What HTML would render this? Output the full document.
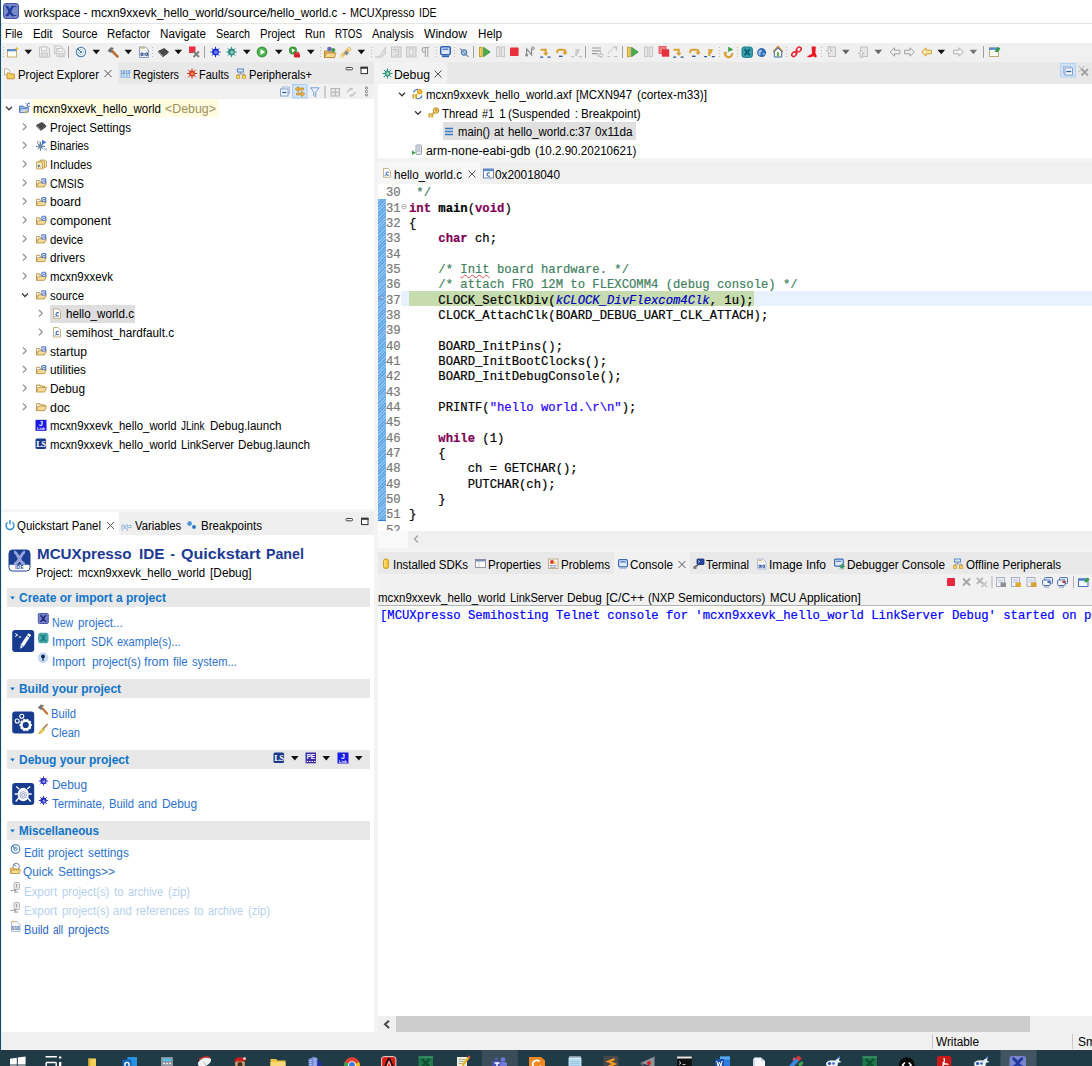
<!DOCTYPE html>
<html lang="en"><head><meta charset="utf-8"><title>MCUXpresso IDE</title>
<style>
html,body{margin:0;padding:0}
body{width:1092px;height:1066px;overflow:hidden;background:#f3f3f3;position:relative;font-family:'Liberation Sans', sans-serif;font-size:12px;color:#000}
#root{position:absolute;left:0;top:0;width:1092px;height:1066px;overflow:hidden}
#root>div,#root>span,#root>svg,#root>pre{position:absolute}
#root>span{white-space:pre;transform-origin:0 50%}
pre{margin:0}

.code{font-family:"Liberation Mono",monospace;font-size:12.22px;line-height:15.333px;white-space:pre;letter-spacing:0;-webkit-text-stroke:.2px}
.kw{color:#7f0055;font-weight:bold}
.cm{color:#3f7f5f}
.st{color:#2a00ff}
.en{color:#0000c0;font-style:italic}
.ln{color:#787878}
.sq{text-decoration:underline wavy #e05050 1px;text-underline-offset:1px}

</style></head><body><div id="root">
<div style="left:0px;top:0px;width:1092px;height:24px;background:#fff;"></div>
<div style="left:0px;top:23px;width:1092px;height:1px;background:#e5e5e5;"></div>
<div style="left:0px;top:24px;width:1092px;height:19px;background:#fff;"></div>
<div style="left:0px;top:43px;width:1092px;height:20px;background:#f0f0f0;"></div>
<div style="left:2px;top:62px;width:372px;height:22px;background:#e8e8e8;"></div>
<div style="left:2px;top:62px;width:116px;height:22px;background:#f1f1f1;"></div>
<div style="left:2px;top:84px;width:372px;height:15px;background:#f1f1f1;"></div>
<div style="left:2px;top:99px;width:372px;height:410px;background:#fff;"></div>
<div style="left:32px;top:99px;width:187px;height:18px;background:#fffce0;"></div>
<div style="left:50px;top:304.5px;width:85px;height:18.5px;background:#dedede;"></div>
<div style="left:2px;top:509px;width:372px;height:3px;background:#f6f6f6;"></div>
<div style="left:2px;top:512px;width:372px;height:23px;background:#efefef;"></div>
<div style="left:2px;top:512px;width:117px;height:23px;background:#fff;"></div>
<div style="left:2px;top:535px;width:372px;height:498px;background:#fff;"></div>
<div style="left:7px;top:588px;width:363px;height:19px;background:#e8e8e8;"></div>
<div style="left:7px;top:679px;width:363px;height:19px;background:#e8e8e8;"></div>
<div style="left:7px;top:750px;width:363px;height:19px;background:#e8e8e8;"></div>
<div style="left:7px;top:821px;width:363px;height:19px;background:#e8e8e8;"></div>
<div style="left:378px;top:62px;width:714px;height:22px;background:#e8e8e8;"></div>
<div style="left:378px;top:62px;width:69px;height:22px;background:#f2f2f2;"></div>
<div style="left:378px;top:84px;width:714px;height:74px;background:#fff;"></div>
<div style="left:443px;top:122px;width:193px;height:18px;background:#e0e0e0;"></div>
<div style="left:378px;top:162px;width:714px;height:22px;background:#f0f0f0;"></div>
<div style="left:378px;top:162px;width:102px;height:22px;background:#f7f7f7;"></div>
<div style="left:378px;top:184px;width:714px;height:364px;background:#fff;"></div>
<div style="left:378px;top:552px;width:714px;height:22px;background:#e9e9e9;"></div>
<div style="left:614px;top:552px;width:76px;height:22px;background:#f1f1f1;"></div>
<div style="left:378px;top:574px;width:714px;height:31px;background:#f1f1f1;"></div>
<div style="left:378px;top:605px;width:714px;height:1px;background:#b4b4b4;"></div>
<div style="left:378px;top:606px;width:714px;height:410px;background:#fff;"></div>
<div style="left:378px;top:1016px;width:714px;height:16px;background:#f0f0f0;"></div>
<div style="left:396px;top:1016px;width:634px;height:16px;background:#cdcdcd;"></div>
<div style="left:0px;top:1032px;width:1092px;height:18px;background:#f0f0f0;"></div>
<div style="left:932px;top:1034px;width:1px;height:15px;background:#c8c8c8;"></div>
<div style="left:1072px;top:1034px;width:1px;height:15px;background:#c8c8c8;"></div>
<div style="left:0px;top:1050px;width:1092px;height:16px;background:#203a46;"></div>
<div style="left:0px;top:0px;width:1px;height:1050px;background:#0f4c6c;"></div>
<div style="left:1px;top:24px;width:1px;height:1026px;background:#e8eef2;"></div>
<div style="left:378px;top:184px;width:714px;height:347px;overflow:hidden"><div style="position:absolute;left:23px;top:107.13px;width:700px;height:15.33px;background:#e8f2fe"></div><div style="position:absolute;left:31px;top:107.13px;width:345px;height:15.33px;background:#c6dbae"></div><div style="position:absolute;left:0px;top:14.80px;width:8px;height:321.00px;background:repeating-linear-gradient(135deg,#62a8e8 0 1.2px,#8cc2f0 1.2px 2.4px);border-bottom:1px solid #2f80d8"></div><pre class="code ln" style="position:absolute;left:8px;top:2.30px">30
31
32
33
34
35
36
37
38
39
40
41
42
43
44
45
46
47
48
49
50
51
52</pre><pre class="code" style="position:absolute;left:31px;top:2.30px"> <span class="cm">*/</span>
<span class="kw">int</span> <b>main</b>(<span class="kw">void</span>)
{
    <span class="kw">char</span> ch;

    <span class="cm">/* <span class="sq">Init</span> board hardware. */</span>
    <span class="cm">/* attach FRO 12M to FLEXCOMM4 (debug console) */</span>
    CLOCK_SetClkDiv(<span class="en">kCLOCK_DivFlexcom4Clk</span>, 1u);
    CLOCK_AttachClk(BOARD_DEBUG_UART_CLK_ATTACH);

    BOARD_InitPins();
    BOARD_InitBootClocks();
    BOARD_InitDebugConsole();

    PRINTF(<span class="st">"hello world.\r\n"</span>);

    <span class="kw">while</span> (1)
    {
        ch = GETCHAR();
        PUTCHAR(ch);
    }
}
</pre></div>
<div style="left:408px;top:531px;width:684px;height:17px;background:#f0f0f0;"></div>
<div style="left:378px;top:531px;width:30px;height:17px;background:#f9f9f9;"></div>
<pre class="code" style="left:380px;top:608.6px;color:#0000ff;-webkit-text-stroke:.2px #0000ff">[MCUXpresso Semihosting Telnet console for 'mcxn9xxevk_hello_world LinkServer Debug' started on port 52719 @ 127.0.0.1]</pre>
<svg style="left:0;top:0" width="1092" height="1066" viewBox="0 0 1092 1066"><path d="M3.5 47V57" stroke="#c8b8a0" stroke-width="1" stroke-dasharray="1 2"/>
<g transform="translate(7,46.5)"><rect x="0.5" y="3" width="9" height="7.500" fill="#fffef0" stroke="#c8b070"/><rect x="0" y="2.500" width="10" height="2.300" fill="#5a8ac8"/><path d="M9.500 .2l.9 1.400 1.400.5-1.400.9-.4 1.400-1-1.400-1.400-.4 1.400-1z" fill="#e8b830"/></g>
<path d="M24.5 49.8h7.6l-3.8 4.4z" fill="#111"/>
<g transform="translate(39,46.5)"><path d="M.5 .5h8l2 2v8h-10z" fill="#ececec" stroke="#c4c4c4"/><rect x="2.5" y=".5" width="5" height="3.5" fill="#f8f8f8" stroke="#c4c4c4" stroke-width=".8"/><rect x="2.5" y="6.5" width="6" height="4" fill="#dcdcdc" stroke="#c4c4c4" stroke-width=".8"/></g>
<g transform="translate(54,46.5)"><g transform="translate(0,-1) scale(.8)"><path d="M.5 .5h8l2 2v8h-10z" fill="#ececec" stroke="#c4c4c4"/><rect x="2.5" y=".5" width="5" height="3.5" fill="#f8f8f8" stroke="#c4c4c4" stroke-width=".8"/><rect x="2.5" y="6.5" width="6" height="4" fill="#dcdcdc" stroke="#c4c4c4" stroke-width=".8"/></g><g transform="translate(2.5,1.8) scale(.8)"><path d="M.5 .5h8l2 2v8h-10z" fill="#ececec" stroke="#c4c4c4"/><rect x="2.5" y=".5" width="5" height="3.5" fill="#f8f8f8" stroke="#c4c4c4" stroke-width=".8"/><rect x="2.5" y="6.5" width="6" height="4" fill="#dcdcdc" stroke="#c4c4c4" stroke-width=".8"/></g></g>
<rect x="68" y="46" width="1" height="12" fill="#a0a0a0"/>
<g transform="translate(76,47.0)"><circle cx="5" cy="5" r="4.6" fill="#fff" stroke="#4f86b8" stroke-width="1.2"/><circle cx="5" cy="5" r="2.6" fill="none" stroke="#4f86b8" stroke-width=".9" stroke-dasharray="1.2 1"/><circle cx="5" cy="5" r="1" fill="#2c5f90"/><path d="M1.5 1.5L5 5" stroke="#2c5f90" stroke-width="1"/></g>
<path d="M92.5 49.8h7.6l-3.8 4.4z" fill="#111"/>
<g transform="translate(107,46.5)"><path d="M4 3.5L10.5 10" stroke="#b87038" stroke-width="2.6" stroke-linecap="round"/><path d="M0.5 4.2L3.8 .8 7 1.6 4.6 4 5.4 5 3.6 6.4z" fill="#707070"/></g>
<path d="M124.5 49.8h7.6l-3.8 4.4z" fill="#111"/>
<g transform="translate(139,46.5)"><path d="M.5 .5h6l3 3v7.5h-9z" fill="#f4f6fb" stroke="#8a9cc0"/><path d="M1.5 1.5h4" stroke="#e0b040" stroke-width="1.2"/><path d="M2 6.5h1.6v2.6H2zM5 6.5v2.6M6.8 6.5h1.6v2.6H6.8z" fill="none" stroke="#35508c" stroke-width="1"/></g>
<path d="M152.5 47V57" stroke="#c8b8a0" stroke-width="1" stroke-dasharray="1 2"/>
<g transform="translate(158,47.5)"><g transform="scale(.88)"><path d="M0 4L7 .5 12 4.5 5.5 9.5z" fill="#4a4a4a"/><path d="M0 4L5.5 9.5 5.5 11 0 5.5z" fill="#7a7a7a"/><path d="M5.5 9.5L12 4.5 12 6 5.5 11z" fill="#2e2e2e"/></g></g>
<path d="M174.5 49.8h7.6l-3.8 4.4z" fill="#111"/>
<g transform="translate(189,46.5)"><rect x="0" y="0" width="6.5" height="6.5" fill="#e83040"/><path d="M4.5 5l5.5 5.5M10 5l-5.5 5.5" stroke="#808080" stroke-width="2"/></g>
<rect x="204" y="46" width="1" height="12" fill="#a0a0a0"/>
<g transform="translate(210,46.5)"><g stroke="#2030d0" stroke-width="1"><path d="M5.500 .3v10.400M.3 5.500h10.400M1.900 1.900l7.200 7.200M9.100 1.900l-7.200 7.200"/></g><circle cx="5.500" cy="5.500" r="3.400" fill="#2030d0"/><circle cx="5.900" cy="5.800" r="1.700" fill="#6a80f0"/></g>
<g transform="translate(226,46.5)"><g stroke="#2f8a8a" stroke-width="1"><path d="M5.500 .3v10.400M.3 5.500h10.400M1.900 1.900l7.200 7.200M9.100 1.900l-7.200 7.200"/></g><circle cx="5.500" cy="5.500" r="3.400" fill="#2f8a8a"/><circle cx="5.900" cy="5.800" r="1.700" fill="#8ad0a0"/></g>
<path d="M243 49.8h7.6l-3.8 4.4z" fill="#111"/>
<g transform="translate(256.5,46.5)"><circle cx="5.5" cy="5.5" r="5.4" fill="#3a9a3a"/><circle cx="5.5" cy="5.5" r="4.2" fill="#4fb34f"/><path d="M4 2.6v5.8l4.6-2.9z" fill="#fff"/></g>
<path d="M275 49.8h7.6l-3.8 4.4z" fill="#111"/>
<g transform="translate(289,46.5)"><circle cx="4" cy="4" r="4" fill="#3a9a3a"/><path d="M2.8 1.8v4.4l3.6-2.2z" fill="#fff"/><rect x="5" y="7" width="6" height="4" rx="0.8" fill="#d82030"/><rect x="6.5" y="5.8" width="3" height="1.5" fill="none" stroke="#d82030" stroke-width=".9"/></g>
<path d="M307 49.8h7.6l-3.8 4.4z" fill="#111"/>
<path d="M320.5 47V57" stroke="#c8b8a0" stroke-width="1" stroke-dasharray="1 2"/>
<g transform="translate(324,46.5)"><path d="M.5 4.5h4l1 1h5v5.5h-10z" fill="#e8b860" stroke="#b88830"/><path d="M.5 11L2.5 6.5h9.5L10.5 11z" fill="#f6d890" stroke="#b88830" stroke-width=".8"/><circle cx="5.5" cy="2.5" r="2.3" fill="#7060c0"/><circle cx="9.2" cy="3.5" r="2.1" fill="#3c9a4c"/></g>
<g transform="translate(340,46.5)"><path d="M1.2 10.2L7.4 4" stroke="#e8c060" stroke-width="3.2" stroke-linecap="round"/><path d="M5.2 7.8L7.8 5.2" stroke="#8a8a90" stroke-width="3.6"/><path d="M7 2.5L9 .5 11.3 2.8 9.3 4.8z" fill="#f6e2a0" stroke="#d8b050" stroke-width=".8"/><path d="M0 11.5L2 9" stroke="#fff4c0" stroke-width="1.6"/></g>
<path d="M357.5 49.8h7.6l-3.8 4.4z" fill="#111"/>
<path d="M371.5 47V57" stroke="#c8b8a0" stroke-width="1" stroke-dasharray="1 2"/>
<g transform="translate(375,46.5)"><path d="M0 10.5h4L10.5 .5v7l-4 3.2z" fill="#dcdcdc" stroke="#c8c8c8" stroke-width=".8"/></g>
<g transform="translate(391,46.5)"><rect x=".5" y=".5" width="9.5" height="10" fill="#e4e4e4" stroke="#c4c4c4"/><path d="M2 3h3v3M7.500 2v6.500H4" fill="none" stroke="#c0c0c0"/></g>
<g transform="translate(406,46.5)"><rect x=".5" y=".5" width="9.5" height="10" fill="#e4e4e4" stroke="#c4c4c4"/><rect x="3.500" y="2.500" width="3.500" height="6" fill="#f0f0f0" stroke="#c8c8c8"/></g>
<g transform="translate(421,46.5)"><path d="M6.8 1v9.5M4.4 1v9.5M8.3 1H3.6a2.4 2.4 0 0 0 0 4.8h.8" fill="none" stroke="#a8a8a8" stroke-width="1.1"/></g>
<path d="M436.5 47V57" stroke="#c8b8a0" stroke-width="1" stroke-dasharray="1 2"/>
<g transform="translate(440,46.0)"><rect x=".7" y=".7" width="9.6" height="8" rx="1.4" fill="#dfe9f8" stroke="#2d5fb4" stroke-width="1.5"/><rect x="2.6" y="2.6" width="5.8" height="1.3" fill="#3d6dbd"/><rect x="2" y="9.6" width="7" height="1.6" fill="#2d5fb4"/></g>
<path d="M454.5 47V57" stroke="#c8b8a0" stroke-width="1" stroke-dasharray="1 2"/>
<g transform="translate(459,47.5)"><circle cx="5" cy="5" r="2.6" fill="#cfe0f4" stroke="#3d78c0" stroke-width="1.2"/><path d="M1 1l8.5 8.5" stroke="#8090a8" stroke-width="1.1"/></g>
<rect x="473" y="46" width="1" height="12" fill="#a0a0a0"/>
<g transform="translate(479,46.5)"><rect x=".5" y=".8" width="2.6" height="9.4" fill="#f2d45c" stroke="#c49a28" stroke-width=".9"/><path d="M4.6 .8v9.4l6.6-4.7z" fill="#4fae4c" stroke="#2e8a34" stroke-width=".7"/></g>
<g transform="translate(496,46.5)"><rect x=".5" y=".5" width="3.2" height="9.6" fill="#e6e6e6" stroke="#c6c6c6"/><rect x="5.3" y=".5" width="3.2" height="9.6" fill="#e6e6e6" stroke="#c6c6c6"/></g>
<g transform="translate(510,47.5)"><rect x="0" y="0" width="8.6" height="8.6" rx=".8" fill="#e8303c"/></g>
<g transform="translate(525,46.5)"><path d="M1.6 8.4V2.4L6.6 8.4V1.8" fill="none" stroke="#8a8a8a" stroke-width="1.2"/><circle cx="1.6" cy="8.6" r="1.5" fill="#909090"/><circle cx="8" cy="1.7" r="1.5" fill="#c0c0c0" stroke="#8a8a8a" stroke-width=".6"/></g>
<g transform="translate(540,47.5)"><path d="M.5 2.2h5.2v3.4" fill="none" stroke="#d8a030" stroke-width="2"/><path d="M3 5.2h5.6L5.8 8.4z" fill="#d8a030"/><path d="M.2 9.6h3M7.6 9.6h3" stroke="#2a4fa0" stroke-width="1.3"/></g>
<g transform="translate(556,47.5)"><path d="M1.2 5.4V4.2a2 2 0 0 1 2-2h4.2a2 2 0 0 1 2 2v.8" fill="none" stroke="#d8a030" stroke-width="2"/><path d="M6.4 4.6h5.2L9 7.8z" fill="#d8a030"/><path d="M3 8.8h3.6" stroke="#2a4fa0" stroke-width="1.3"/></g>
<g transform="translate(571,47.0)"><path d="M5.2 9V4.6" stroke="#c8c8c8" stroke-width="2"/><path d="M5 1.2v6L9.4 4.2z" fill="#c8c8c8" transform="rotate(-35 6 4)"/><path d="M.2 9.6h2.8M7.8 9.6h3" stroke="#c0c0c0" stroke-width="1.3"/></g>
<rect x="585" y="46" width="1" height="12" fill="#a0a0a0"/>
<g transform="translate(592,47.0)"><path d="M0 1h9M0 3.8h9M0 6.6h5.5" stroke="#9a9a9a" stroke-width="1.2"/><path d="M6 7.2h3v-1.6l2.4 2.6L9 10.8V9.2H6z" fill="#f0f0f0" stroke="#a8a8a8" stroke-width=".7"/></g>
<g transform="translate(607,46.5)"><path d="M1 7L6 2.4" stroke="#c4c4c4" stroke-width="1.2" stroke-dasharray="1.5 1"/><path d="M6 .6h3.4V4" fill="none" stroke="#c0c0c0" stroke-width="1.3"/><path d="M.4 10h3M7 10h3.6" stroke="#c0c0c0" stroke-width="1.2"/></g>
<rect x="622" y="46" width="1" height="12" fill="#a0a0a0"/>
<g transform="translate(627,46.5)"><rect x=".5" y=".8" width="2.6" height="9.4" fill="#f2d45c" stroke="#c49a28" stroke-width=".9"/><path d="M4.6 .8v9.4l6.6-4.7z" fill="#4fae4c" stroke="#2e8a34" stroke-width=".7"/></g>
<g transform="translate(644,46.5)"><rect x=".5" y=".5" width="3.2" height="9.6" fill="#e6e6e6" stroke="#c6c6c6"/><rect x="5.3" y=".5" width="3.2" height="9.6" fill="#e6e6e6" stroke="#c6c6c6"/></g>
<g transform="translate(659,46.5)"><rect x="0" y="0" width="7" height="7" fill="#f08088" stroke="#e04850" stroke-width=".8"/><rect x="2.8" y="2.8" width="7.4" height="7.4" fill="#e8303c"/></g>
<g transform="translate(673,47.5)"><path d="M.5 2.2h5.2v3.4" fill="none" stroke="#d8a030" stroke-width="2"/><path d="M3 5.2h5.6L5.8 8.4z" fill="#d8a030"/><path d="M.2 9.6h3M7.6 9.6h3" stroke="#2a4fa0" stroke-width="1.3"/></g>
<g transform="translate(689,47.5)"><path d="M1.2 5.4V4.2a2 2 0 0 1 2-2h4.2a2 2 0 0 1 2 2v.8" fill="none" stroke="#d8a030" stroke-width="2"/><path d="M6.4 4.6h5.2L9 7.8z" fill="#d8a030"/><path d="M3 8.8h3.6" stroke="#2a4fa0" stroke-width="1.3"/></g>
<g transform="translate(704,47.0)"><path d="M5.2 9V4.6" stroke="#d8a030" stroke-width="2"/><path d="M5 1.2v6L9.4 4.2z" fill="#d8a030" transform="rotate(-35 6 4)"/><path d="M.2 9.6h2.8M7.8 9.6h3" stroke="#2a4fa0" stroke-width="1.3"/></g>
<path d="M719.5 47V57" stroke="#c8b8a0" stroke-width="1" stroke-dasharray="1 2"/>
<g transform="translate(724,46.5)"><path d="M4.2 .3v5.2l5.2-2.6z" fill="#3da048"/><path d="M1.4 5.4a3.6 3.6 0 1 0 6.8 1.4" fill="none" stroke="#d8a030" stroke-width="2.2"/><path d="M-.6 5.8h4.2L1.5 8.6z" fill="#d8a030"/></g>
<path d="M737.5 47V57" stroke="#c8b8a0" stroke-width="1" stroke-dasharray="1 2"/>
<g transform="translate(741.5,46.5)"><rect x=".5" y=".5" width="10.4" height="10.4" rx="2.2" fill="#38a0b0" stroke="#1c7c8c"/><path d="M3 2.6l5.4 6.2M8.4 2.6L3 8.8" stroke="#0c5a70" stroke-width="1.7"/></g>
<g transform="translate(757,48.0)"><circle cx="4.6" cy="4.6" r="4.5" fill="#2f6cb4"/><path d="M2.4 2c1.2-.8 2.4-.2 2.6.8s-1 1.2-1.4 2.2.4 2-.6 2.4S1 5.600 1.400 4z" fill="#9cc4ec"/><circle cx="6.600" cy="6" r="1.100" fill="#9cc4ec"/></g>
<g transform="translate(773,46.5)"><path d="M.2 5.200L5 .2l4.800 5" fill="none" stroke="#b8863c" stroke-width="1.500"/><path d="M1.300 5.200v5.300h7.400V5.200L5 1.600z" fill="#f4f8ff" stroke="#3f68b4" stroke-width="1"/><rect x="4" y="5.600" width="2" height="4.600" fill="#6cb040"/></g>
<path d="M786.5 47V57" stroke="#c8b8a0" stroke-width="1" stroke-dasharray="1 2"/>
<g transform="translate(791,46.5)"><g fill="none" stroke="#e82430" stroke-width="1.500"><ellipse cx="3.200" cy="7.600" rx="2.700" ry="2" transform="rotate(-45 3.200 7.600)"/><ellipse cx="7.800" cy="3" rx="2.700" ry="2" transform="rotate(-45 7.800 3)"/><path d="M4.200 6.600L6.800 4"/></g></g>
<g transform="translate(807,46.5)"><path d="M4.600 0h4.200L8.400 6.200l1.200 3v1.600H6.800V9.600L4 10.800H.4V9.800L5 7.200z" fill="#e81820"/></g>
<path d="M821.5 47V57" stroke="#c8b8a0" stroke-width="1" stroke-dasharray="1 2"/>
<g transform="translate(826,46.5)"><rect x="2.500" y=".5" width="7" height="9.500" fill="#e6e6e6" stroke="#c2c2c2"/><path d="M2.200 0h2v4h1.600L3.200 7 .6 4h1.600z" fill="#f4f4f4" stroke="#a8a8a8" stroke-width=".7"/></g>
<path d="M842 49.8h7.6l-3.8 4.4z" fill="#666"/>
<g transform="translate(858,46.5)"><rect x="2.500" y=".5" width="7" height="9.500" fill="#e6e6e6" stroke="#c2c2c2"/><g transform="translate(0,11) scale(1,-1)"><path d="M2.200 0h2v4h1.600L3.200 7 .6 4h1.600z" fill="#f4f4f4" stroke="#a8a8a8" stroke-width=".7"/></g></g>
<path d="M874.5 49.8h7.6l-3.8 4.4z" fill="#666"/>
<g transform="translate(889.5,47.0)"><path d="M.6 5L5 .8v2.400h5.400v3.600H5v2.400z" fill="#f0f0f0" stroke="#a0a0a0" stroke-width="1"/></g>
<g transform="translate(904,47.0)"><g transform="translate(11,0) scale(-1,1)"><path d="M.6 5L5 .8v2.400h5.400v3.600H5v2.400z" fill="#f0f0f0" stroke="#a0a0a0" stroke-width="1"/></g></g>
<g transform="translate(921,47.0)"><path d="M.6 5L5 .8v2.400h5.400v3.600H5v2.400z" fill="#f8e8b0" stroke="#d8a030" stroke-width="1"/></g>
<path d="M937.5 49.8h7.6l-3.8 4.4z" fill="#111"/>
<g transform="translate(953,47.0)"><g transform="translate(11,0) scale(-1,1)"><path d="M.6 5L5 .8v2.400h5.400v3.600H5v2.400z" fill="#f4f4f4" stroke="#b0b0b0" stroke-width="1"/></g></g>
<path d="M969.5 49.8h7.6l-3.8 4.4z" fill="#777"/>
<rect x="983" y="46" width="1" height="12" fill="#a0a0a0"/>
<g transform="translate(989,45.5)"><rect x=".5" y="2.500" width="9" height="8.500" fill="#fdfdf6" stroke="#c0a878"/><rect x="0" y="2" width="10" height="2.400" fill="#5a8ac8"/><path d="M5.400 6.400l3.400-4.800 2.600 1.400-2.400 3.400z" fill="#2f9a4c"/></g>
<rect x="3.5" y="3.5" width="15" height="15" rx="2.500" fill="#7c88c8" stroke="#4254a8"/><path d="M6 6.500c3 0 3.600 9 7.500 9M13.500 6.500c-3 0-3.600 9-7.500 9" fill="none" stroke="#1f3f9f" stroke-width="2.600"/><path d="M5.500 6.500h3M13.500 6.500h3M5.500 15.500h3M13.500 15.500h3" stroke="#1f3f9f" stroke-width="1.200"/>
<g transform="translate(4,68.5)"><path d="M.5 .5h3.500l2 2v4h-5.500z" fill="#fff" stroke="#b0a080" stroke-width=".8"/><path d="M3 4.500h2.500l1 1h3.800v4.800h-7.300z" fill="#f4cc60" stroke="#c09030" stroke-width=".9"/></g>
<path d="M104.5 70.0l7 7M111.5 70.0l-7 7" stroke="#555" stroke-width="1"/>
<g transform="translate(120,69.5)"><text x="0" y="4" font-family="Liberation Mono, monospace" font-weight="bold" font-size="4.600" fill="#3a8ad8" textLength="10.500" lengthAdjust="spacingAndGlyphs">1010</text><text x="0" y="8" font-family="Liberation Mono, monospace" font-weight="bold" font-size="4.600" fill="#6ab0e8" textLength="10.500" lengthAdjust="spacingAndGlyphs">0101</text></g>
<g transform="translate(187,68.5)"><g stroke="#c83020" stroke-width="1"><path d="M5 0v10M0 5h10M1.300 1.300l7.400 7.400M8.700 1.300l-7.400 7.400"/></g><circle cx="5" cy="5" r="2.900" fill="#d83828"/><circle cx="5.200" cy="5.200" r="1.300" fill="#f0a040"/></g>
<g transform="translate(236,68.5)"><rect x="1.500" y=".5" width="6" height="3" fill="#dce8f8" stroke="#4a80c8" stroke-width=".9"/><path d="M4.500 3.500v2M2 7.500v-2h6.500v2" fill="none" stroke="#8a8a8a" stroke-width=".8"/><rect x=".5" y="7" width="3.200" height="2.800" fill="#f8d868" stroke="#c8a030" stroke-width=".8"/><rect x="6.500" y="7" width="3.200" height="2.800" fill="#f8d868" stroke="#c8a030" stroke-width=".8"/></g>
<g transform="translate(345.5,67)"><rect x=".5" y=".5" width="6.500" height="2.300" rx=".8" fill="#fff" stroke="#444" stroke-width="1"/></g>
<g transform="translate(360.5,66.8)"><rect x=".5" y=".5" width="6.500" height="6.300" fill="#fff" stroke="#333" stroke-width="1"/><rect x="0" y="0" width="7.500" height="2" fill="#333"/></g>
<g transform="translate(280,86.5)"><rect x="2.500" y=".5" width="7" height="6.500" fill="#e4ecf8" stroke="#9ab0d8" stroke-width=".8"/><rect x=".5" y="2.500" width="7.500" height="7" fill="#f4f8ff" stroke="#7a98c8" stroke-width=".9"/><path d="M2.200 6h4.200" stroke="#3058a0" stroke-width="1.300"/></g>
<rect x="292.500" y="84.500" width="14.500" height="13.500" fill="#cfe4fa" stroke="#a8cdf4"/>
<g transform="translate(294.5,86)"><path d="M4 .2L.6 3l3.400 2.800V4h5V2H4z" fill="#e8b040" stroke="#b88020" stroke-width=".6"/><path d="M7 5.200l3.400 2.800L7 10.800V9H2V7h5z" fill="#e8b040" stroke="#b88020" stroke-width=".6"/></g>
<g transform="translate(310,87)"><path d="M.5 .8h8.600L5.800 5v4.800L3.800 8.600V5z" fill="#eef4fc" stroke="#6a9ad8" stroke-width=".9"/></g>
<rect x="324.5" y="86" width="1" height="12" fill="#a8a8a8"/>
<g transform="translate(330.5,88)"><rect x=".5" y=".5" width="8.500" height="7.500" fill="#e8e8e8" stroke="#b4b4b4"/><path d="M4.800 .5v7.500M.5 4.200h8.500" stroke="#b4b4b4"/></g>
<g transform="translate(346,87)"><path d="M1 5.500L4.500 1.500 6 3M9.500 5L6 9 4.500 7.500" fill="none" stroke="#c0c0c0" stroke-width="1.200"/><path d="M4.500 .5l3 1-2 2zM6 10l-3-1 2-2z" fill="#c8c8c8"/></g>
<g transform="translate(365,86.5)"><g fill="#fff" stroke="#666" stroke-width=".8"><circle cx="1.500" cy="1.500" r="1.100"/><circle cx="1.500" cy="5" r="1.100"/><circle cx="1.500" cy="8.500" r="1.100"/></g></g>
<path d="M6 106.8l3 3 3-3" fill="none" stroke="#3c3c3c" stroke-width="1.3"/>
<g transform="translate(19,102.5)"><path d="M.5 3.500h3.500l1 1.200h4v4.800h-8.500z" fill="#8fb4e8" stroke="#5078b8" stroke-width=".9"/><path d="M.4 10L2 6.200h8L8.400 10z" fill="#c4daf8" stroke="#5078b8" stroke-width=".8"/><path d="M10.800 1.200a1.600 1.600 0 1 0 0 2.400" fill="none" stroke="#3050a0" stroke-width="1"/><path d="M7 8l1.500 1.500-1.500 1.500-1.500-1.500z" fill="#e8b030"/><path d="M6.500 1.500l1 -1" stroke="#5078b8" stroke-width=".8"/></g>
<path d="M23 123.367l3.2 3.3-3.2 3.3" fill="none" stroke="#8c8c8c" stroke-width="1.2"/>
<g transform="translate(36,121.667)"><g transform="scale(.85)"><path d="M0 4L7 .5 12 4.5 5.5 9.5z" fill="#4a4a4a"/><path d="M0 4L5.5 9.5 5.5 11 0 5.5z" fill="#7a7a7a"/><path d="M5.5 9.5L12 4.5 12 6 5.5 11z" fill="#2e2e2e"/></g></g>
<path d="M23 142.034l3.2 3.3-3.2 3.3" fill="none" stroke="#8c8c8c" stroke-width="1.2"/>
<g transform="translate(36,139.834)"><g stroke="#5a7a9a" stroke-width="1"><path d="M4.500 2v9M0 6.500h9M1.500 3.500l6 6M7.500 3.500l-6 6"/></g><circle cx="4.500" cy="6.500" r="2.300" fill="#6a8aaa"/><path d="M6 0v5l4.400-2.500z" fill="#3a78d0"/><path d="M1.500 1v3M3 1v3" stroke="#9aa8b8" stroke-width=".8"/><path d="M9 8v3M10.500 8v3" stroke="#9aa8b8" stroke-width=".8"/></g>
<path d="M23 160.701l3.2 3.3-3.2 3.3" fill="none" stroke="#8c8c8c" stroke-width="1.2"/>
<g transform="translate(36,158.501)"><path d="M4.500 1.500h4l2 1v6h-6z" fill="#f4e0a8" stroke="#b89848" stroke-width=".8"/><path d="M2.500 2.500h4l2 1v6h-6z" fill="#f4e0a8" stroke="#b89848" stroke-width=".8"/><path d="M.5 3.500h4l2 1v6h-6z" fill="#f8e8b8" stroke="#b89848" stroke-width=".8"/><path d="M2 6l2.600 1.500L2 9z" fill="#4068b8"/></g>
<path d="M23 179.368l3.2 3.3-3.2 3.3" fill="none" stroke="#8c8c8c" stroke-width="1.2"/>
<g transform="translate(36,178.368)"><path d="M.5 2.200h3.200l1 1.100h3.600v1.400" fill="#f0d080" stroke="#b89040" stroke-width=".9"/><path d="M.5 8.600V2.200M.4 8.600L2.200 4.500h8.200L8.600 8.600z" fill="#f6dc98" stroke="#b89040" stroke-width=".9"/><rect x="5.300" y="0" width="5" height="5.200" rx="1.300" fill="#5c80cc"/><path d="M8.900 1.700a1.300 1.300 0 1 0 0 1.800" fill="none" stroke="#fff" stroke-width=".9"/></g>
<path d="M23 198.035l3.2 3.3-3.2 3.3" fill="none" stroke="#8c8c8c" stroke-width="1.2"/>
<g transform="translate(36,197.035)"><path d="M.5 2.200h3.200l1 1.100h3.600v1.400" fill="#f0d080" stroke="#b89040" stroke-width=".9"/><path d="M.5 8.600V2.200M.4 8.600L2.200 4.500h8.200L8.600 8.600z" fill="#f6dc98" stroke="#b89040" stroke-width=".9"/><rect x="5.300" y="0" width="5" height="5.200" rx="1.300" fill="#5c80cc"/><path d="M8.900 1.700a1.300 1.300 0 1 0 0 1.800" fill="none" stroke="#fff" stroke-width=".9"/></g>
<path d="M23 216.702l3.2 3.3-3.2 3.3" fill="none" stroke="#8c8c8c" stroke-width="1.2"/>
<g transform="translate(36,215.702)"><path d="M.5 2.200h3.200l1 1.100h3.600v1.400" fill="#f0d080" stroke="#b89040" stroke-width=".9"/><path d="M.5 8.600V2.200M.4 8.600L2.200 4.500h8.200L8.600 8.600z" fill="#f6dc98" stroke="#b89040" stroke-width=".9"/><rect x="5.300" y="0" width="5" height="5.200" rx="1.300" fill="#5c80cc"/><path d="M8.900 1.700a1.300 1.300 0 1 0 0 1.800" fill="none" stroke="#fff" stroke-width=".9"/></g>
<path d="M23 235.369l3.2 3.3-3.2 3.3" fill="none" stroke="#8c8c8c" stroke-width="1.2"/>
<g transform="translate(36,234.369)"><path d="M.5 2.200h3.200l1 1.100h3.600v1.400" fill="#f0d080" stroke="#b89040" stroke-width=".9"/><path d="M.5 8.600V2.200M.4 8.600L2.200 4.500h8.200L8.600 8.600z" fill="#f6dc98" stroke="#b89040" stroke-width=".9"/><rect x="5.300" y="0" width="5" height="5.200" rx="1.300" fill="#5c80cc"/><path d="M8.900 1.700a1.300 1.300 0 1 0 0 1.800" fill="none" stroke="#fff" stroke-width=".9"/></g>
<path d="M23 254.036l3.2 3.3-3.2 3.3" fill="none" stroke="#8c8c8c" stroke-width="1.2"/>
<g transform="translate(36,253.036)"><path d="M.5 2.200h3.200l1 1.100h3.600v1.400" fill="#f0d080" stroke="#b89040" stroke-width=".9"/><path d="M.5 8.600V2.200M.4 8.600L2.200 4.500h8.200L8.600 8.600z" fill="#f6dc98" stroke="#b89040" stroke-width=".9"/><rect x="5.300" y="0" width="5" height="5.200" rx="1.300" fill="#5c80cc"/><path d="M8.900 1.700a1.300 1.300 0 1 0 0 1.800" fill="none" stroke="#fff" stroke-width=".9"/></g>
<path d="M23 272.70300000000003l3.2 3.3-3.2 3.3" fill="none" stroke="#8c8c8c" stroke-width="1.2"/>
<g transform="translate(36,271.70300000000003)"><path d="M.5 2.200h3.200l1 1.100h3.600v1.400" fill="#f0d080" stroke="#b89040" stroke-width=".9"/><path d="M.5 8.600V2.200M.4 8.600L2.200 4.500h8.200L8.600 8.600z" fill="#f6dc98" stroke="#b89040" stroke-width=".9"/><rect x="5.300" y="0" width="5" height="5.200" rx="1.300" fill="#5c80cc"/><path d="M8.900 1.700a1.300 1.300 0 1 0 0 1.800" fill="none" stroke="#fff" stroke-width=".9"/></g>
<path d="M22 293.47l3 3 3-3" fill="none" stroke="#3c3c3c" stroke-width="1.3"/>
<g transform="translate(36,290.37)"><path d="M.5 2.200h3.200l1 1.100h3.600v1.400" fill="#f0d080" stroke="#b89040" stroke-width=".9"/><path d="M.5 8.600V2.200M.4 8.600L2.200 4.500h8.200L8.600 8.600z" fill="#f6dc98" stroke="#b89040" stroke-width=".9"/><rect x="5.300" y="0" width="5" height="5.200" rx="1.300" fill="#5c80cc"/><path d="M8.900 1.700a1.300 1.300 0 1 0 0 1.800" fill="none" stroke="#fff" stroke-width=".9"/></g>
<path d="M23 347.37100000000004l3.2 3.3-3.2 3.3" fill="none" stroke="#8c8c8c" stroke-width="1.2"/>
<g transform="translate(36,346.37100000000004)"><path d="M.5 2.200h3.200l1 1.100h3.600v1.400" fill="#f0d080" stroke="#b89040" stroke-width=".9"/><path d="M.5 8.600V2.200M.4 8.600L2.200 4.500h8.200L8.600 8.600z" fill="#f6dc98" stroke="#b89040" stroke-width=".9"/><rect x="5.300" y="0" width="5" height="5.200" rx="1.300" fill="#5c80cc"/><path d="M8.900 1.700a1.300 1.300 0 1 0 0 1.800" fill="none" stroke="#fff" stroke-width=".9"/></g>
<path d="M23 366.038l3.2 3.3-3.2 3.3" fill="none" stroke="#8c8c8c" stroke-width="1.2"/>
<g transform="translate(36,365.038)"><path d="M.5 2.200h3.200l1 1.100h3.600v1.400" fill="#f0d080" stroke="#b89040" stroke-width=".9"/><path d="M.5 8.600V2.200M.4 8.600L2.200 4.500h8.200L8.600 8.600z" fill="#f6dc98" stroke="#b89040" stroke-width=".9"/><rect x="5.300" y="0" width="5" height="5.200" rx="1.300" fill="#5c80cc"/><path d="M8.900 1.700a1.300 1.300 0 1 0 0 1.800" fill="none" stroke="#fff" stroke-width=".9"/></g>
<path d="M23 384.705l3.2 3.3-3.2 3.3" fill="none" stroke="#8c8c8c" stroke-width="1.2"/>
<g transform="translate(36,383.505)"><path d="M.5 1.500h3.500l1 1.200h3.500v1.500" fill="#f0d080" stroke="#b89040" stroke-width=".9"/><path d="M.5 8.500V1.500M.4 8.500L2.300 3.800h8.300L8.700 8.500z" fill="#f6dc98" stroke="#b89040" stroke-width=".9"/></g>
<path d="M23 403.372l3.2 3.3-3.2 3.3" fill="none" stroke="#8c8c8c" stroke-width="1.2"/>
<g transform="translate(36,402.172)"><path d="M.5 1.500h3.500l1 1.200h3.500v1.500" fill="#f0d080" stroke="#b89040" stroke-width=".9"/><path d="M.5 8.500V1.500M.4 8.500L2.300 3.800h8.300L8.700 8.500z" fill="#f6dc98" stroke="#b89040" stroke-width=".9"/></g>
<path d="M39 310.037l3.2 3.3-3.2 3.3" fill="none" stroke="#8c8c8c" stroke-width="1.2"/>
<g transform="translate(53,308.337)"><path d="M.5 .5h4.500l2.500 2.500v7h-7z" fill="#fff" stroke="#c0a878" stroke-width=".9"/><path d="M5.800 4.700a1.700 1.700 0 1 0 0 2.600" fill="none" stroke="#3060b0" stroke-width="1.100"/><path d="M1.500 8.200h1.200" stroke="#3060b0" stroke-width=".8"/></g>
<path d="M39 328.704l3.2 3.3-3.2 3.3" fill="none" stroke="#8c8c8c" stroke-width="1.2"/>
<g transform="translate(53,327.004)"><path d="M.5 .5h4.500l2.500 2.500v7h-7z" fill="#fff" stroke="#c0a878" stroke-width=".9"/><path d="M5.800 4.700a1.700 1.700 0 1 0 0 2.600" fill="none" stroke="#3060b0" stroke-width="1.100"/><path d="M1.500 8.200h1.200" stroke="#3060b0" stroke-width=".8"/></g>
<g transform="translate(35.5,419.83900000000006)"><rect x="0" y="0" width="11" height="11" fill="#1a1ae6"/><text x="5.500" y="6" font-family="Liberation Sans, sans-serif" font-weight="bold" font-size="7" fill="#fff" text-anchor="middle">J</text><text x="5.500" y="10.300" font-family="Liberation Sans, sans-serif" font-weight="bold" font-size="3.800" fill="#fff" text-anchor="middle">Link</text></g>
<g transform="translate(35.5,438.50600000000003)"><rect x="0" y="0" width="10.600" height="10.400" rx="1.500" fill="#1c3a8c"/><text x="5.300" y="8.300" font-family="Liberation Serif, serif" font-weight="bold" font-size="8.500" fill="#fff" text-anchor="middle" letter-spacing="-.6">LS</text></g>
<g transform="translate(5,520)"><path d="M2.600 2.300a4 4 0 1 0 4.800 0" fill="none" stroke="#2d8fd8" stroke-width="1.400"/><path d="M5 0v4.600" stroke="#2d8fd8" stroke-width="1.400"/></g>
<path d="M107 522.0l7 7M114 522.0l-7 7" stroke="#555" stroke-width="1"/>
<g transform="translate(121,521)"><text x="0" y="7.500" font-family="Liberation Sans, sans-serif" font-size="7.500" fill="#3a88d0" textLength="11" lengthAdjust="spacingAndGlyphs">(x)=</text></g>
<g transform="translate(187,521)"><circle cx="2.600" cy="2.600" r="2.300" fill="#4a90d8"/><circle cx="7" cy="6" r="2.300" fill="#3070b8" stroke="#fff" stroke-width=".6"/></g>
<g transform="translate(345.5,518)"><rect x=".5" y=".5" width="6.500" height="2.300" rx=".8" fill="#fff" stroke="#444" stroke-width="1"/></g>
<g transform="translate(361,517.8)"><rect x=".5" y=".5" width="6.500" height="6.300" fill="#fff" stroke="#333" stroke-width="1"/><rect x="0" y="0" width="7.500" height="2" fill="#333"/></g>
<g transform="translate(8.5,549.5)"><rect x=".5" y=".5" width="21" height="21" rx="3.500" fill="#fff" stroke="#1c3f94"/><path d="M.5 15.300V4a3.500 3.500 0 0 1 3.500-3.500h14a3.500 3.500 0 0 1 3.500 3.500v11.300z" fill="#1c3f94"/><path d="M5.500 2.500c4 0 5.500 12 11 12M16.500 2.500c-4 0-5.500 12-11 12" fill="none" stroke="#9aa2dc" stroke-width="3"/><text x="11" y="19.800" font-family="Liberation Sans, sans-serif" font-weight="bold" font-size="4.600" fill="#1c3f94" text-anchor="middle" letter-spacing=".3">IDE</text></g>
<path d="M10.200 596.5h4.600l-2.300 3z" fill="#0f74c8"/>
<path d="M10.200 687.5h4.600l-2.300 3z" fill="#0f74c8"/>
<path d="M10.200 758.5h4.600l-2.300 3z" fill="#0f74c8"/>
<path d="M10.200 829.5h4.600l-2.300 3z" fill="#0f74c8"/>
<g transform="translate(12.2,630)"><rect x="0" y="0" width="22" height="22" rx="3" fill="#173b8f"/><path d="M3 3.500l2.500 1.500L3 6.500M6.500 7h2.500" fill="none" stroke="#fff" stroke-width="1"/><path d="M16.200 3.200l2.800 1.800-7.400 11.600-3.600 2.200.6-4.200z" fill="#fff"/><path d="M15 5.800l2.600 1.700" stroke="#173b8f" stroke-width="1"/><path d="M9.200 15.300l2.200 1.400" stroke="#173b8f" stroke-width=".8"/></g>
<g transform="translate(12.2,711.5)"><rect x="0" y="0" width="22" height="22" rx="3" fill="#173b8f"/><path d="M17.80 13.50L19.70 13.50" stroke="#fff" stroke-width="2.200"/><path d="M16.98 16.03L18.52 17.14" stroke="#fff" stroke-width="2.200"/><path d="M14.83 17.59L15.42 19.40" stroke="#fff" stroke-width="2.200"/><path d="M12.17 17.59L11.58 19.40" stroke="#fff" stroke-width="2.200"/><path d="M10.02 16.03L8.48 17.14" stroke="#fff" stroke-width="2.200"/><path d="M9.20 13.50L7.30 13.50" stroke="#fff" stroke-width="2.200"/><path d="M10.02 10.97L8.48 9.86" stroke="#fff" stroke-width="2.200"/><path d="M12.17 9.41L11.58 7.60" stroke="#fff" stroke-width="2.200"/><path d="M14.83 9.41L15.42 7.60" stroke="#fff" stroke-width="2.200"/><path d="M16.98 10.97L18.52 9.86" stroke="#fff" stroke-width="2.200"/><circle cx="13.5" cy="13.5" r="4.3" fill="none" stroke="#fff" stroke-width="2.4"/><circle cx="9.600" cy="4.800" r="2" fill="none" stroke="#fff" stroke-width="1.100"/><circle cx="5" cy="9.500" r="2" fill="none" stroke="#fff" stroke-width="1.100"/></g>
<g transform="translate(12.2,783)"><rect x="0" y="0" width="22" height="22" rx="3" fill="#173b8f"/><g stroke="#fff" stroke-width="1.300" fill="none"><path d="M7 6L4 3.500M15 6l3-2.500M5.500 11H2.500M16.500 11h3M6.500 15L3.500 18.500M15.500 15l3 3.500"/></g><ellipse cx="11" cy="11.500" rx="5.600" ry="6.800" fill="#fff"/><circle cx="11" cy="12" r="3.300" fill="none" stroke="#8a98c8" stroke-width=".9"/><circle cx="11" cy="12" r="1.500" fill="none" stroke="#8a98c8" stroke-width=".9"/></g>
<g transform="translate(37.8,613)"><rect x=".5" y=".5" width="10" height="10" rx="1" fill="#7880c8" stroke="#5058a8"/><path d="M2.500 2.500c2.500 0 3 6 6 6M8.500 2.500c-2.500 0-3 6-6 6" fill="none" stroke="#182878" stroke-width="1.700"/></g>
<g transform="translate(37.8,632.5)"><rect x=".3" y=".3" width="10.400" height="10.400" rx="2.600" fill="#48a8a8"/><path d="M2.800 2.500c2.300 0 3 6 5.500 6M8.300 2.500c-2.300 0-3 6-5.500 6" fill="none" stroke="#187880" stroke-width="1.700"/></g>
<g transform="translate(38,652.8)"><circle cx="5" cy="5" r="4.800" fill="#c8dcf4" stroke="#a8c4e8" stroke-width=".6"/><circle cx="5" cy="3.800" r="2" fill="#182858"/><path d="M5 5v3.200" stroke="#182858" stroke-width="1.200"/></g>
<g transform="translate(37.5,704)"><path d="M4.500 4L9.500 9.500" stroke="#c07838" stroke-width="2.400" stroke-linecap="round"/><path d="M.3 3.800L3.200 .6 6.600 1.500 4.400 3.600 5 4.600 3.400 6z" fill="#787878"/></g>
<g transform="translate(38,723.5)"><path d="M9.500 .5L4.500 6" stroke="#b06830" stroke-width="1.300"/><path d="M4.800 4.800l1.800 1.800L2.500 10 .3 9.800z" fill="#e8c840" stroke="#b89820" stroke-width=".5"/></g>
<g transform="translate(38.5,776)"><g stroke="#3030b0" stroke-width=".9"><path d="M5 .3v9.400M.3 5h9.400M1.700 1.700l6.600 6.600M8.300 1.700l-6.600 6.600"/></g><circle cx="5" cy="5" r="3.100" fill="#2828c0"/><circle cx="5.400" cy="5.400" r="1.500" fill="#8898f0"/></g>
<g transform="translate(38.5,795.5)"><g stroke="#3030b0" stroke-width=".9"><path d="M5 .3v9.400M.3 5h9.400M1.700 1.700l6.600 6.600M8.300 1.700l-6.600 6.600"/></g><circle cx="5" cy="5" r="3.100" fill="#2828c0"/><circle cx="5.400" cy="5.400" r="1.500" fill="#8898f0"/></g>
<g transform="translate(273.5,752.5)"><rect x="0" y="0" width="10.600" height="10.400" rx="1.500" fill="#1c3a8c"/><text x="5.300" y="8.300" font-family="Liberation Serif, serif" font-weight="bold" font-size="8.500" fill="#fff" text-anchor="middle" letter-spacing="-.6">LS</text></g>
<path d="M291 756.0999999999999h7.6l-3.8 4.4z" fill="#111"/>
<g transform="translate(305.5,752.5)"><rect x="0" y="0" width="10.500" height="10.800" fill="#3c2ca8"/><text x="5.300" y="6.300" font-family="Liberation Sans, sans-serif" font-weight="bold" font-size="6.500" fill="#fff" text-anchor="middle" letter-spacing="-.4">PE</text><path d="M1 9h9" stroke="#fff" stroke-width="1.200" stroke-dasharray="1.500 1"/></g>
<path d="M322.5 756.0999999999999h7.6l-3.8 4.4z" fill="#111"/>
<g transform="translate(337.5,752.5)"><rect x="0" y="0" width="11" height="11" fill="#1a1ae6"/><text x="5.500" y="6" font-family="Liberation Sans, sans-serif" font-weight="bold" font-size="7" fill="#fff" text-anchor="middle">J</text><text x="5.500" y="10.300" font-family="Liberation Sans, sans-serif" font-weight="bold" font-size="3.800" fill="#fff" text-anchor="middle">Link</text></g>
<path d="M355 756.0999999999999h7.6l-3.8 4.4z" fill="#111"/>
<g transform="translate(10.5,844)"><circle cx="5" cy="5" r="4.300" fill="#fff" stroke="#3a78b8" stroke-width="1.100"/><circle cx="5" cy="5" r="1.700" fill="none" stroke="#3a78b8" stroke-width=".9"/><path d="M2 2l3 3" stroke="#285890" stroke-width="1"/></g>
<g transform="translate(10.2,863)"><circle cx="6" cy="3.500" r="3.200" fill="#fff" stroke="#587898" stroke-width=".9"/><path d="M4 1.500l2 2" stroke="#385878" stroke-width=".9"/><path d="M.5 5h3l1 1h4.500v4.500h-8.500z" fill="#f0c868" stroke="#c09030" stroke-width=".8"/><path d="M.4 10.500L2 7h8.300l-1.500 3.500z" fill="#f8dc98" stroke="#c09030" stroke-width=".7"/></g>
<g transform="translate(10.5,882)"><rect x="3.500" y=".5" width="5.500" height="7" rx="1" fill="#e8e8e8" stroke="#b0b0b0" stroke-width=".9"/><path d="M6 2v3.500" stroke="#a0a0a0" stroke-width="1"/><path d="M0 8.500h2.500M3.500 10h4" stroke="#909090" stroke-width="1"/><path d="M2.500 7.500l2 2 2-2z" fill="#888"/></g>
<g transform="translate(10.5,902)"><rect x="3.500" y=".5" width="5.500" height="7" rx="1" fill="#e8e8e8" stroke="#b0b0b0" stroke-width=".9"/><path d="M6 2v3.500" stroke="#a0a0a0" stroke-width="1"/><path d="M0 8.500h2.500M3.500 10h4" stroke="#909090" stroke-width="1"/><path d="M2.500 7.500l2 2 2-2z" fill="#888"/></g>
<g transform="translate(11,921)"><path d="M.5 .5h5.500l3 3v7h-8.500z" fill="#f4f6fb" stroke="#a8b4d0" stroke-width=".9"/><path d="M.5 .5h3" stroke="#e0b040" stroke-width="1.200"/><text x="4.700" y="9" font-family="Liberation Sans, sans-serif" font-weight="bold" font-size="4.600" fill="#3858a0" text-anchor="middle">010</text></g>
<g transform="translate(382.5,68.5)"><g stroke="#2f8a7a" stroke-width="1"><path d="M5 0v10M0 5h10M1.300 1.300l7.400 7.400M8.700 1.300l-7.400 7.400"/></g><circle cx="5" cy="5" r="2.900" fill="#3a9a8a"/><circle cx="5.200" cy="5.200" r="1.400" fill="#a8e0a0"/></g>
<path d="M434.5 70.5l7 7M441.5 70.5l-7 7" stroke="#555" stroke-width="1"/>
<g transform="translate(1060.5,63.5)"><rect x="0" y="0" width="15" height="13.500" fill="#cfe2f6" stroke="#b4d2f2" stroke-width="1"/><rect x="3" y="3" width="7" height="6.500" fill="#dce8f8" stroke="#9ab4dc" stroke-width=".8"/><rect x="4.500" y="4.500" width="7.500" height="7" fill="#f8fbff" stroke="#7a98c8" stroke-width=".9"/><path d="M5.800 8h5" stroke="#3068a8" stroke-width="1.400"/></g>
<g transform="translate(1078,65.5)"><path d="M.5 .5l6 6M6.500 .5l-6 6" stroke="#c4c4c4" stroke-width="1.600" stroke-dasharray="1.500 .8"/><path d="M3.500 3.500l6.500 6.500M10 3.500l-6.500 6.500" stroke="#a4a4a4" stroke-width="2"/></g>
<path d="M399 92.8l3 3 3-3" fill="none" stroke="#3c3c3c" stroke-width="1.3"/>
<g transform="translate(412.5,88.5)"><path d="M1 4a4 4 0 0 1 6-2.500M9.500 7a4 4 0 0 1-6 2.500" fill="none" stroke="#3a78c8" stroke-width="1.200"/><circle cx="7.200" cy="3.200" r="2.600" fill="#f0b838" stroke="#c89020" stroke-width=".5"/><rect x="0" y="5.500" width="2" height="4.500" fill="#d8a830"/><rect x="2.800" y="5.500" width="2" height="4.500" fill="#d8a830"/></g>
<path d="M415 111.3l3 3 3-3" fill="none" stroke="#3c3c3c" stroke-width="1.3"/>
<g transform="translate(428.5,107)"><circle cx="7.500" cy="3.500" r="2.800" fill="#f4d070" stroke="#b88828" stroke-width=".9"/><path d="M7.500 2v1.800h1.300" fill="none" stroke="#805810" stroke-width=".8"/><path d="M5.500 5.500L3 8" stroke="#b88828" stroke-width="1.600"/><rect x="0" y="6" width="2" height="4.500" fill="#d8a830"/><rect x="2.800" y="6" width="2" height="4.500" fill="#d8a830"/></g>
<g transform="translate(445,127.5)"><path d="M0 1h8M0 4h8M0 7h8" stroke="#3a78c0" stroke-width="1.500"/></g>
<g transform="translate(412,144.5)"><rect x="4" y=".5" width="5.500" height="9.500" rx=".8" fill="#e8ecf0" stroke="#8a98a8" stroke-width=".9"/><path d="M5.300 2.500h3M5.300 4.500h3M5.300 6.500h3" stroke="#8a98a8" stroke-width=".8"/><path d="M0 6v4.500l3.800-2.200z" fill="#38a048"/></g>
<g transform="translate(383,168)"><g transform="scale(1,.93)"><path d="M.5 .5h4.500l2.500 2.500v7h-7z" fill="#fff" stroke="#c0a878" stroke-width=".9"/><path d="M5.800 4.700a1.700 1.700 0 1 0 0 2.600" fill="none" stroke="#3060b0" stroke-width="1.100"/><path d="M1.500 8.200h1.200" stroke="#3060b0" stroke-width=".8"/></g></g>
<path d="M468.5 170.5l7 7M475.5 170.5l-7 7" stroke="#555" stroke-width="1"/>
<g transform="translate(483,168.5)"><rect x=".5" y=".5" width="10" height="9" fill="#fff" stroke="#5a7aa8" stroke-width=".9"/><rect x=".5" y=".5" width="10" height="2.200" fill="#5a8ac8"/><path d="M6.800 4.700a1.700 1.700 0 1 0 0 2.600" fill="none" stroke="#3060b0" stroke-width="1.100"/></g>
<circle cx="404" cy="206.500" r="2.300" fill="#fff" stroke="#a0a0a0" stroke-width=".8"/><path d="M402.800 206.500h2.400" stroke="#808080" stroke-width=".8"/>
<path d="M379 296.500h2.500v-1.800l2.500 2.800-2.500 2.800v-1.800H379z" fill="#a8c8f0" stroke="#5078b8" stroke-width=".5"/>
<path d="M418 535.500l-3.500 3.500 3.500 3.500" fill="none" stroke="#a0a0a0" stroke-width="1.200"/>
<g transform="translate(383,558.5)"><rect x=".5" y=".5" width="5" height="9.500" rx="2" fill="#f4c838" stroke="#c89818" stroke-width=".9"/><path d="M2 2v6" stroke="#fff0a0" stroke-width="1"/></g>
<g transform="translate(475,559)"><rect x=".5" y=".5" width="10" height="8" fill="#fff" stroke="#8a8a9a" stroke-width=".9"/><rect x=".5" y=".5" width="10" height="2" fill="#7a8ab0"/><path d="M4 2.500v6" stroke="#b0b0c0" stroke-width=".7"/></g>
<g transform="translate(548,558.5)"><rect x=".5" y=".5" width="9.500" height="9.500" fill="#f8f4ec" stroke="#b8a888" stroke-width=".9"/><circle cx="4" cy="3.500" r="1.900" fill="#e03030"/><path d="M2 7h2.500M5.500 7h3M2 8.700h6" stroke="#8090b8" stroke-width=".9"/><path d="M6.500 2.500l2 2.500h-4z" fill="#f0c030"/></g>
<g transform="translate(618,559)"><rect x=".6" y=".6" width="8.800" height="7.300" rx="1.200" fill="#e4ecfa" stroke="#3a68b8" stroke-width="1.200"/><rect x="2.300" y="2.300" width="5.400" height="1.200" fill="#3a68b8"/><path d="M1.500 9.300h7" stroke="#a0b4d8" stroke-width="1"/></g>
<path d="M678.5 561.0l7 7M685.5 561.0l-7 7" stroke="#555" stroke-width="1"/>
<g transform="translate(693.5,558.5)"><rect x="3.500" y=".5" width="7" height="5.500" rx=".6" fill="#2848a0" stroke="#182c70" stroke-width=".8"/><path d="M4.800 2l1.300 1-1.300 1" fill="none" stroke="#fff" stroke-width=".7"/><path d="M.5 9.500C.5 7 3 8.500 4.500 6.500" fill="none" stroke="#606060" stroke-width="1.400"/><rect x="0" y="8" width="3" height="2.500" fill="#808080"/></g>
<g transform="translate(757,558.5)"><path d="M.5 .5h5.500l3 3v7h-8.500z" fill="#f4f6fb" stroke="#a8b4d0" stroke-width=".9"/><path d="M2 6.500h1.500v2.600H2zM4.700 6.500v2.600M6 6.500h1.500v2.600H6z" fill="none" stroke="#3858a0" stroke-width=".9"/><path d="M1.500 2h3" stroke="#e0b040" stroke-width="1.100"/></g>
<g transform="translate(834,558.5)"><rect x=".6" y=".6" width="8.600" height="7" rx="1" fill="#e4ecfa" stroke="#3a68b8" stroke-width="1.200"/><rect x="2.200" y="2.200" width="5" height="1.100" fill="#3a68b8"/><g stroke="#2f8a5a" stroke-width=".9"><path d="M8 5v6M5 8h6M6 6l4 4M10 6l-4 4"/></g><circle cx="8" cy="8" r="1.800" fill="#3a9a6a"/></g>
<g transform="translate(953,558.5)"><rect x="1.500" y=".5" width="6" height="3" fill="#dce8f8" stroke="#4a80c8" stroke-width=".9"/><path d="M4.500 3.500v2M2 7.500v-2h6.500v2" fill="none" stroke="#8a8a8a" stroke-width=".8"/><rect x=".5" y="7" width="3.200" height="2.800" fill="#f8d868" stroke="#c8a030" stroke-width=".8"/><rect x="6.500" y="7" width="3.200" height="2.800" fill="#f8d868" stroke="#c8a030" stroke-width=".8"/></g>
<g transform="translate(947,578)"><rect x="0" y="0" width="8" height="8" rx=".8" fill="#e8283c"/></g>
<g transform="translate(962,577.5)"><path d="M1 1l7 7M8 1L1 8" stroke="#a8a8a8" stroke-width="2"/></g>
<g transform="translate(976,577)"><path d="M.8 .8l6 6M6.800 .8l-6 6" stroke="#b0b0b0" stroke-width="1.700"/><path d="M5.500 4.500l5.500 5.500M11 4.500l-5.500 5.500" stroke="#c0c0c0" stroke-width="1.500"/></g>
<rect x="991.5" y="576" width="1" height="12" fill="#b0b0b0"/>
<g transform="translate(996,577)"><rect x=".5" y=".5" width="8" height="9" fill="#f0f2f8" stroke="#a0a8c0" stroke-width=".9"/><path d="M2 3h5M2 5h5" stroke="#b0b8c8" stroke-width=".8"/><rect x="4.500" y="5.500" width="5.500" height="4.500" fill="#909090"/></g>
<g transform="translate(1011,577)"><rect x=".5" y=".5" width="8" height="9" fill="#f0f2f8" stroke="#a0a8c0" stroke-width=".9"/><path d="M2 3h5M2 5h5" stroke="#b0b8c8" stroke-width=".8"/><rect x="4.500" y="5.500" width="5.500" height="4.500" fill="#e0a830"/></g>
<g transform="translate(1026.5,577)"><rect x=".5" y=".5" width="8" height="9" fill="#f0f2f8" stroke="#a0a8c0" stroke-width=".9"/><path d="M2 3h5M2 5h5" stroke="#b0b8c8" stroke-width=".8"/><rect x="4.500" y="5.500" width="5.500" height="4.500" fill="#d8a030"/></g>
<g transform="translate(1042,577)"><rect x="2.500" y=".6" width="8" height="6" rx=".8" fill="#e8eefa" stroke="#4a70b8" stroke-width="1"/><rect x=".6" y="3" width="7.500" height="5.500" rx=".8" fill="#f4f7fd" stroke="#4a70b8" stroke-width="1"/><path d="M2 10h5" stroke="#8098c8" stroke-width="1"/><rect x="5.500" y="4" width="3" height="2" fill="#4a70b8"/></g>
<g transform="translate(1057,577)"><rect x="2.500" y=".6" width="8" height="6" rx=".8" fill="#e8eefa" stroke="#4a70b8" stroke-width="1"/><rect x=".6" y="3" width="7.500" height="5.500" rx=".8" fill="#f4f7fd" stroke="#4a70b8" stroke-width="1"/><path d="M2 10h5" stroke="#8098c8" stroke-width="1"/><rect x="5.500" y="4" width="3" height="2" fill="#c83030"/></g>
<rect x="1073" y="576" width="1" height="12" fill="#b0b0b0"/>
<g transform="translate(1078,576.5)"><rect x=".5" y="2.500" width="9.500" height="7.500" fill="#f4f7fd" stroke="#4a70b8" stroke-width="1"/><rect x="0" y="2" width="10.500" height="2.200" fill="#4a78c8"/><path d="M6 5.500l3-4.500 2.500 1.500-2.500 3.500z" fill="#38a048"/></g>
<path d="M389 1020.700l-4 3.600 4 3.600" fill="none" stroke="#484848" stroke-width="2"/>
<rect x="481.800" y="1050" width="36" height="16" fill="#3a4e5a"/><rect x="1000.500" y="1050" width="36" height="16" fill="#425661"/>
<g transform="translate(10,1056)"><path d="M0 2.800L6.800 1.800V8.500H0zM7.800 1.600L15.600 .5V8.500H7.800zM0 9.500h6.800v1H0zM7.800 9.500h7.800v1H7.800z" fill="#fff"/></g>
<g transform="translate(45.5,1056)"><path d="M.7 1.500V.7h10v.8M.7 6.500V10M10.700 6.500V10M.7 6.500h10" fill="none" stroke="#fff" stroke-width="1.400"/><rect x="13.500" y=".5" width="2.300" height="2" fill="#fff"/><rect x="13.500" y="6" width="2.300" height="4" fill="#fff"/></g>
<g transform="translate(88.5,1056)"><rect x="0" y="2.500" width="7.500" height="8" fill="#f4cf5a"/><rect x="0" y="2.500" width="2" height="8" fill="#e0b030"/></g>
<g transform="translate(122.5,1056)"><rect x="5" y="1" width="9.500" height="9" fill="#2a90e0"/><rect x="0" y="3.500" width="9" height="7" rx="1" fill="#0f64b8"/><circle cx="4.500" cy="8.500" r="2.200" fill="none" stroke="#fff" stroke-width="1.300"/></g>
<g transform="translate(161,1056)"><rect x="0" y="1" width="12" height="10" rx="1" fill="#8a929c"/><rect x="1.500" y="2.500" width="9" height="2.500" fill="#4fc3e8"/><path d="M2 7.500h8" stroke="#e8ecf0" stroke-width="1.600" stroke-dasharray="2 1"/></g>
<g transform="translate(197,1056)"><ellipse cx="7.500" cy="6" rx="7" ry="4" fill="#f4f4f4" transform="rotate(-25 7.500 6)"/><path d="M2 4c3-3 8-4 11-2" fill="none" stroke="#d83030" stroke-width="1.500"/><path d="M7 6l2 4" stroke="#c0c0c0" stroke-width="1"/></g>
<g transform="translate(233,1056)"><circle cx="7" cy="8" r="5" fill="#c8a070"/><path d="M1 5.500C2 1 8 0 11 2.500l3 1-3 2z" fill="#c82020"/><circle cx="7" cy="8.500" r="2.500" fill="#403020"/><circle cx="11.500" cy="2.500" r="1.300" fill="#f0f0f0"/></g>
<g transform="translate(270.5,1056)"><path d="M0 3h5.500l1.500 1.500h8V10H0z" fill="#f0c040"/><path d="M0 6h15v4H0z" fill="#f8d878"/></g>
<g transform="translate(307.5,1056)"><path d="M1 3l4-1.500v9H1zM5 .5l5 1.500v9H5z" fill="#7088d8"/><path d="M10 4l4 1.500V10h-4z" fill="#2030a0"/><path d="M2 4.500h2M2 6.500h2M2 8.500h2M6 3h3M6 5h3M6 7h3M6 9h3" stroke="#d8e0f8" stroke-width=".8"/></g>
<g transform="translate(344,1056)"><circle cx="8" cy="9" r="7.800" fill="#e84030"/><path d="M8 9L.8 6A7.800 7.800 0 0 0 4 15.800z" fill="#38a850"/><path d="M8 9l7.200-3A7.800 7.800 0 0 1 12 15.800z" fill="#f8c020"/><circle cx="8" cy="9" r="3.800" fill="#fff"/><circle cx="8" cy="9" r="2.900" fill="#3878e0"/></g>
<g transform="translate(381,1056)"><rect x=".6" y=".6" width="14.300" height="12" rx="2.500" fill="#d82018" stroke="#f0d0d0" stroke-width="1"/><path d="M4 10.500L7.500 2.500h1L12 10.500" fill="none" stroke="#181010" stroke-width="1.700"/><path d="M6 10.500l2-5 2 5" fill="none" stroke="#fff" stroke-width=".8"/></g>
<g transform="translate(418.5,1056)"><rect x="0" y=".5" width="14.500" height="11" fill="#1e7848"/><rect x="0" y=".5" width="14.500" height="1" fill="#48a878"/><path d="M3.500 3l7.500 8M11 3L3.500 11" stroke="#0c5030" stroke-width="2.400"/></g>
<g transform="translate(456,1056)"><rect x="1" y="1" width="10" height="10" fill="#f4f0e0"/><path d="M2.500 3.500h7M2.500 5.500h7M2.500 7.500h5" stroke="#98a078" stroke-width=".8"/><path d="M13.500 .5L6.500 9.500" stroke="#e8b020" stroke-width="2.200"/><path d="M13.800 0l-1.200 1.500" stroke="#d04040" stroke-width="2.200"/></g>
<g transform="translate(492,1056)"><circle cx="11" cy="3.500" r="2.300" fill="#7078d8"/><circle cx="4.500" cy="3" r="1.500" fill="#5058c0"/><rect x="0" y="5" width="10" height="6" rx="1" fill="#4850b8"/><rect x="8" y="6" width="7" height="5" rx="1.500" fill="#7078d8"/><path d="M2.500 7h5M5 7v4" stroke="#fff" stroke-width="1.400"/></g>
<g transform="translate(529,1056)"><path d="M0 1h12l4 3.500V11H0z" fill="#f08820"/><path d="M10.500 5.500a4 4 0 1 0 1 4" fill="none" stroke="#fff" stroke-width="1.800"/></g>
<g transform="translate(568.5,1056)"><rect x="0" y="1.500" width="13" height="10" rx="1" fill="#b8dcf0"/><path d="M1.500 0v3M3.500 0v3M5.500 0v3M7.500 0v3M9.500 0v3M11.500 0v3" stroke="#e8f4fc" stroke-width="1"/><path d="M2 5.500h9M2 7.500h9M2 9.500h9" stroke="#88b8d8" stroke-width=".7"/></g>
<g transform="translate(603.5,1056)"><rect x="0" y="0" width="15" height="11" rx="1.500" fill="#484848"/><path d="M11 3L5 5.500l6 2.500L5 10.500" fill="none" stroke="#f89820" stroke-width="2.200"/></g>
<g transform="translate(640.5,1056)"><path d="M0 7L14 .5v10.500z" fill="#909498"/><path d="M0 7l4 4" stroke="#606468" stroke-width="1.500"/><circle cx="8.500" cy="7" r="2" fill="#e02020"/></g>
<g transform="translate(677,1056)"><rect x="0" y=".5" width="14.800" height="11" fill="#101010"/><rect x="0" y=".5" width="14.800" height="2" fill="#e8e8e8"/><path d="M2 5.500l2 1.500-2 1.500M5.500 8.500h3" fill="none" stroke="#d0d0d0" stroke-width=".9"/></g>
<g transform="translate(715,1056)"><rect x="5" y=".5" width="10" height="10.500" fill="#2a7ce0"/><rect x="5" y=".5" width="10" height="3" fill="#58a8f0"/><rect x="0" y="3" width="9" height="8" rx="1" fill="#1a50a8"/><path d="M1.800 5l1.300 5 1.400-4 1.400 4 1.300-5" fill="none" stroke="#fff" stroke-width="1"/></g>
<g transform="translate(753,1056)"><path d="M1 1.500h7l4 3.500v6H1z" fill="#f4f6fa"/><path d="M8 1.500v3.500h4" fill="#c8d0e0"/><path d="M0 3v8h2V2z" fill="#d0d8e8"/></g>
<g transform="translate(788,1056)"><path d="M0 11L8 2l3 3-6 6z" fill="#3888e0"/><path d="M8 2l2.500-2.500 3 3L11 5z" fill="#e83838"/><path d="M10 8l4-3 1.500 2.500L12 11z" fill="#38a848"/><path d="M5 4l2-2" stroke="#f05050" stroke-width="2"/></g>
<g transform="translate(825.5,1056)"><ellipse cx="6.500" cy="8" rx="6" ry="3.800" fill="#e8f0f8"/><path d="M9 5l5.500-4.500-1 4 2.500 1.500-4 1z" fill="#e8f0f8"/><circle cx="4" cy="7.500" r="1.600" fill="#2850a8"/><circle cx="8" cy="7.500" r="1.300" fill="#3868c0"/><path d="M12 2.500l2.500-2" stroke="#3868c0" stroke-width="1.200"/></g>
<g transform="translate(862.5,1056)"><rect x="0" y=".5" width="14.500" height="11" fill="#1e7848"/><rect x="0" y=".5" width="14.500" height="1" fill="#48a878"/><path d="M3.500 3l7.500 8M11 3L3.500 11" stroke="#0c5030" stroke-width="2.400"/></g>
<g transform="translate(899,1056)"><circle cx="7.800" cy="9" r="7.800" fill="#080808"/><path d="M6 6.500L3.500 9 6 11.500M9.600 6.500L12.100 9 9.600 11.500" fill="none" stroke="#fff" stroke-width="1.500"/></g>
<g transform="translate(937,1056)"><rect x="0" y="0" width="14.300" height="12" rx="2" fill="#c81818"/><path d="M6.500 2.500c1.500 0 1 4-1 8M5.500 6.500c2 2 5 1.500 6 2" fill="none" stroke="#fff" stroke-width="1.300"/></g>
<g transform="translate(973.5,1056)"><ellipse cx="6.500" cy="8" rx="6" ry="3.800" fill="#e8f0f8"/><path d="M9 5l5.500-4.500-1 4 2.500 1.500-4 1z" fill="#e8f0f8"/><circle cx="4" cy="7.500" r="1.600" fill="#2850a8"/><circle cx="8" cy="7.500" r="1.300" fill="#3868c0"/><path d="M12 2.500l2.500-2" stroke="#3868c0" stroke-width="1.200"/></g>
<g transform="translate(1009.5,1056)"><rect x="0" y="0" width="16.500" height="12" rx="2.500" fill="#7a84cc"/><path d="M3 2.500c3.500 0 6.500 8.500 10.500 8.500M13.500 2.500c-3.500 0-6.500 8.500-10.500 8.500" fill="none" stroke="#2038a0" stroke-width="2.800"/></g></svg>
<span style="left:23.5px;top:4.5px;line-height:16px;font-size:12px;transform:scaleX(0.9850);">workspace</span>
<span style="left:83.5px;top:4.5px;line-height:16px;font-size:12px;">-</span>
<span style="left:91px;top:4.5px;line-height:16px;font-size:12px;transform:scaleX(0.9970);">mcxn9xxevk_hello_world</span>
<span style="left:223.5px;top:4.5px;line-height:16px;font-size:12px;transform:scaleX(1.0893);">/source/</span>
<span style="left:270px;top:4.5px;line-height:16px;font-size:12px;transform:scaleX(0.9608);">hello_world.c</span>
<span style="left:342px;top:4.5px;line-height:16px;font-size:12px;">-</span>
<span style="left:349.5px;top:4.5px;line-height:16px;font-size:12px;transform:scaleX(0.9039);">MCUXpresso</span>
<span style="left:419px;top:4.5px;line-height:16px;font-size:12px;transform:scaleX(0.8743);">IDE</span>
<span style="left:5px;top:26px;line-height:16px;font-size:12px;transform:scaleX(0.9047);">File</span>
<span style="left:32.5px;top:26px;line-height:16px;font-size:12px;transform:scaleX(0.9426);">Edit</span>
<span style="left:62px;top:26px;line-height:16px;font-size:12px;transform:scaleX(0.9334);">Source</span>
<span style="left:107px;top:26px;line-height:16px;font-size:12px;transform:scaleX(0.9480);">Refactor</span>
<span style="left:160px;top:26px;line-height:16px;font-size:12px;transform:scaleX(0.9710);">Navigate</span>
<span style="left:216px;top:26px;line-height:16px;font-size:12px;transform:scaleX(0.8940);">Search</span>
<span style="left:260px;top:26px;line-height:16px;font-size:12px;transform:scaleX(0.9368);">Project</span>
<span style="left:305px;top:26px;line-height:16px;font-size:12px;transform:scaleX(0.9084);">Run</span>
<span style="left:335px;top:26px;line-height:16px;font-size:12px;transform:scaleX(0.8205);">RTOS</span>
<span style="left:372px;top:26px;line-height:16px;font-size:12px;transform:scaleX(0.9399);">Analysis</span>
<span style="left:424px;top:26px;line-height:16px;font-size:12px;transform:scaleX(1.0073);">Window</span>
<span style="left:478px;top:26px;line-height:16px;font-size:12px;transform:scaleX(0.9722);">Help</span>
<span style="left:18px;top:66.5px;line-height:16px;font-size:12px;transform:scaleX(0.9488);">Project Explorer</span>
<span style="left:133px;top:66.5px;line-height:16px;font-size:12px;transform:scaleX(0.9075);">Registers</span>
<span style="left:199px;top:66.5px;line-height:16px;font-size:12px;transform:scaleX(0.9178);">Faults</span>
<span style="left:249px;top:66.5px;line-height:16px;font-size:12px;transform:scaleX(0.9303);">Peripherals+</span>
<span style="left:33px;top:101px;line-height:16px;font-size:12px;transform:scaleX(0.9595);">mcxn9xxevk_hello_world</span>
<span style="left:165px;top:101px;line-height:16px;font-size:12px;color:#a0905c;transform:scaleX(1.0326);">&lt;Debug&gt;</span>
<span style="left:50px;top:119.667px;line-height:16px;font-size:12px;transform:scaleX(0.9637);">Project Settings</span>
<span style="left:50px;top:138.334px;line-height:16px;font-size:12px;transform:scaleX(0.8995);">Binaries</span>
<span style="left:50px;top:157.001px;line-height:16px;font-size:12px;transform:scaleX(0.9395);">Includes</span>
<span style="left:50px;top:175.668px;line-height:16px;font-size:12px;transform:scaleX(0.8944);">CMSIS</span>
<span style="left:50px;top:194.335px;line-height:16px;font-size:12px;transform:scaleX(1.0097);">board</span>
<span style="left:50px;top:213.002px;line-height:16px;font-size:12px;transform:scaleX(1.0274);">component</span>
<span style="left:50px;top:231.669px;line-height:16px;font-size:12px;transform:scaleX(0.9514);">device</span>
<span style="left:50px;top:250.336px;line-height:16px;font-size:12px;transform:scaleX(0.9718);">drivers</span>
<span style="left:50px;top:269.003px;line-height:16px;font-size:12px;transform:scaleX(0.9541);">mcxn9xxevk</span>
<span style="left:50px;top:287.67px;line-height:16px;font-size:12px;transform:scaleX(0.9436);">source</span>
<span style="left:50px;top:343.671px;line-height:16px;font-size:12px;transform:scaleX(1.0085);">startup</span>
<span style="left:50px;top:362.338px;line-height:16px;font-size:12px;transform:scaleX(0.9813);">utilities</span>
<span style="left:50px;top:381.005px;line-height:16px;font-size:12px;transform:scaleX(0.9894);">Debug</span>
<span style="left:50px;top:399.672px;line-height:16px;font-size:12px;transform:scaleX(1.0331);">doc</span>
<span style="left:50.2px;top:418.339px;line-height:16px;font-size:12px;transform:scaleX(0.9490);">mcxn9xxevk_hello_world</span>
<span style="left:181.4px;top:418.339px;line-height:16px;font-size:12px;transform:scaleX(0.8352);">JLink</span>
<span style="left:209.5px;top:418.339px;line-height:16px;font-size:12px;transform:scaleX(0.9654);">Debug.launch</span>
<span style="left:50.2px;top:437.006px;line-height:16px;font-size:12px;transform:scaleX(0.9490);">mcxn9xxevk_hello_world</span>
<span style="left:181px;top:437.006px;line-height:16px;font-size:12px;transform:scaleX(0.9240);">LinkServer</span>
<span style="left:238px;top:437.006px;line-height:16px;font-size:12px;transform:scaleX(0.9722);">Debug.launch</span>
<span style="left:66px;top:306.337px;line-height:16px;font-size:12px;transform:scaleX(0.9708);">hello_world.c</span>
<span style="left:66px;top:325.004px;line-height:16px;font-size:12px;transform:scaleX(0.9753);">semihost_hardfault.c</span>
<span style="left:17px;top:518px;line-height:16px;font-size:12px;transform:scaleX(0.9540);">Quickstart Panel</span>
<span style="left:135px;top:518px;line-height:16px;font-size:12px;transform:scaleX(0.9361);">Variables</span>
<span style="left:201px;top:518px;line-height:16px;font-size:12px;transform:scaleX(0.9625);">Breakpoints</span>
<span style="left:37px;top:546px;line-height:16px;font-size:14px;font-weight:bold;color:#1c3a94;transform:scaleX(1.0845);">MCUXpresso</span>
<span style="left:138.5px;top:546px;line-height:16px;font-size:14px;font-weight:bold;color:#1c3a94;transform:scaleX(1.0924);">IDE</span>
<span style="left:170.3px;top:546px;line-height:16px;font-size:14px;font-weight:bold;color:#1c3a94;">-</span>
<span style="left:181px;top:546px;line-height:16px;font-size:14px;font-weight:bold;color:#1c3a94;transform:scaleX(1.1495);">Quickstart</span>
<span style="left:265.8px;top:546px;line-height:16px;font-size:14px;font-weight:bold;color:#1c3a94;transform:scaleX(1.0145);">Panel</span>
<span style="left:36.3px;top:565px;line-height:16px;font-size:12px;transform:scaleX(0.9118);">Project:</span>
<span style="left:78.2px;top:565px;line-height:16px;font-size:12px;transform:scaleX(0.9535);">mcxn9xxevk_hello_world</span>
<span style="left:210.2px;top:565px;line-height:16px;font-size:12px;transform:scaleX(0.9897);">[Debug]</span>
<span style="left:19px;top:589.5px;line-height:16px;font-size:12px;font-weight:bold;color:#0f74c8;transform:scaleX(1.0020);">Create or import a project</span>
<span style="left:19px;top:680.5px;line-height:16px;font-size:12px;font-weight:bold;color:#0f74c8;transform:scaleX(0.9933);">Build your project</span>
<span style="left:19px;top:751.5px;line-height:16px;font-size:12px;font-weight:bold;color:#0f74c8;transform:scaleX(0.9999);">Debug your project</span>
<span style="left:19px;top:822.5px;line-height:16px;font-size:12px;font-weight:bold;color:#0f74c8;transform:scaleX(0.9752);">Miscellaneous</span>
<span style="left:52.2px;top:615.3px;line-height:16px;font-size:12px;color:#2a72cc;transform:scaleX(0.8828);">New</span>
<span style="left:78px;top:615.3px;line-height:16px;font-size:12px;color:#2a72cc;transform:scaleX(0.9733);">project...</span>
<span style="left:52.2px;top:634.3px;line-height:16px;font-size:12px;color:#2a72cc;transform:scaleX(0.9790);">Import</span>
<span style="left:91px;top:634.3px;line-height:16px;font-size:12px;color:#2a72cc;transform:scaleX(0.8952);">SDK</span>
<span style="left:117.2px;top:634.3px;line-height:16px;font-size:12px;color:#2a72cc;transform:scaleX(0.9170);">example(s)...</span>
<span style="left:52.2px;top:653.8px;line-height:16px;font-size:12px;color:#2a72cc;transform:scaleX(0.9790);">Import</span>
<span style="left:91.6px;top:653.8px;line-height:16px;font-size:12px;color:#2a72cc;transform:scaleX(0.9777);">project(s)</span>
<span style="left:144.4px;top:653.8px;line-height:16px;font-size:12px;color:#2a72cc;transform:scaleX(1.0292);">from</span>
<span style="left:173px;top:653.8px;line-height:16px;font-size:12px;color:#2a72cc;transform:scaleX(0.9515);">file</span>
<span style="left:191.8px;top:653.8px;line-height:16px;font-size:12px;color:#2a72cc;transform:scaleX(0.9330);">system...</span>
<span style="left:51px;top:705.8px;line-height:16px;font-size:12px;color:#2a72cc;transform:scaleX(0.9368);">Build</span>
<span style="left:51px;top:725.3px;line-height:16px;font-size:12px;color:#2a72cc;transform:scaleX(0.9248);">Clean</span>
<span style="left:52px;top:777.3px;line-height:16px;font-size:12px;color:#2a72cc;transform:scaleX(0.9894);">Debug</span>
<span style="left:51.7px;top:796.3px;line-height:16px;font-size:12px;color:#2a72cc;transform:scaleX(0.9441);">Terminate,</span>
<span style="left:108.9px;top:796.3px;line-height:16px;font-size:12px;color:#2a72cc;transform:scaleX(0.9368);">Build</span>
<span style="left:137.9px;top:796.3px;line-height:16px;font-size:12px;color:#2a72cc;transform:scaleX(0.9535);">and</span>
<span style="left:161.7px;top:796.3px;line-height:16px;font-size:12px;color:#2a72cc;transform:scaleX(0.9922);">Debug</span>
<span style="left:23.9px;top:845.3px;line-height:16px;font-size:12px;color:#2a72cc;transform:scaleX(0.9426);">Edit</span>
<span style="left:47.6px;top:845.3px;line-height:16px;font-size:12px;color:#2a72cc;transform:scaleX(0.9686);">project</span>
<span style="left:87.5px;top:845.3px;line-height:16px;font-size:12px;color:#2a72cc;transform:scaleX(0.9889);">settings</span>
<span style="left:23.2px;top:864.3px;line-height:16px;font-size:12px;color:#2a72cc;transform:scaleX(0.9841);">Quick</span>
<span style="left:57.6px;top:864.3px;line-height:16px;font-size:12px;color:#2a72cc;transform:scaleX(0.9935);">Settings&gt;&gt;</span>
<span style="left:23.9px;top:883.8px;line-height:16px;font-size:12px;color:#b5d0ee;transform:scaleX(0.9542);">Export</span>
<span style="left:62px;top:883.8px;line-height:16px;font-size:12px;color:#b5d0ee;transform:scaleX(0.9477);">project(s)</span>
<span style="left:113.6px;top:883.8px;line-height:16px;font-size:12px;color:#b5d0ee;transform:scaleX(0.9485);">to</span>
<span style="left:127.9px;top:883.8px;line-height:16px;font-size:12px;color:#b5d0ee;transform:scaleX(0.9073);">archive</span>
<span style="left:167.6px;top:883.8px;line-height:16px;font-size:12px;color:#b5d0ee;transform:scaleX(0.9424);">(zip)</span>
<span style="left:23.9px;top:903.3px;line-height:16px;font-size:12px;color:#b5d0ee;transform:scaleX(0.9542);">Export</span>
<span style="left:62px;top:903.3px;line-height:16px;font-size:12px;color:#b5d0ee;transform:scaleX(0.9477);">project(s)</span>
<span style="left:113.2px;top:903.3px;line-height:16px;font-size:12px;color:#b5d0ee;transform:scaleX(0.9385);">and</span>
<span style="left:136.3px;top:903.3px;line-height:16px;font-size:12px;color:#b5d0ee;transform:scaleX(0.9400);">references</span>
<span style="left:193.9px;top:903.3px;line-height:16px;font-size:12px;color:#b5d0ee;transform:scaleX(0.9485);">to</span>
<span style="left:207.6px;top:903.3px;line-height:16px;font-size:12px;color:#b5d0ee;transform:scaleX(0.9073);">archive</span>
<span style="left:247.6px;top:903.3px;line-height:16px;font-size:12px;color:#b5d0ee;transform:scaleX(0.9424);">(zip)</span>
<span style="left:23.9px;top:922.3px;line-height:16px;font-size:12px;color:#1f66c6;transform:scaleX(0.9293);">Build</span>
<span style="left:53.4px;top:922.3px;line-height:16px;font-size:12px;color:#1f66c6;transform:scaleX(0.8322);">all</span>
<span style="left:68.4px;top:922.3px;line-height:16px;font-size:12px;color:#1f66c6;transform:scaleX(0.9755);">projects</span>
<span style="left:394px;top:67px;line-height:16px;font-size:12px;transform:scaleX(1.0177);">Debug</span>
<span style="left:426.3px;top:87px;line-height:16px;font-size:12px;transform:scaleX(0.9538);">mcxn9xxevk_hello_world.axf</span>
<span style="left:576px;top:87px;line-height:16px;font-size:12px;transform:scaleX(0.9542);">[MCXN947</span>
<span style="left:636.5px;top:87px;line-height:16px;font-size:12px;transform:scaleX(0.9812);">(cortex-m33)]</span>
<span style="left:442px;top:105.5px;line-height:16px;font-size:12px;transform:scaleX(0.9413);">Thread</span>
<span style="left:482.2px;top:105.5px;line-height:16px;font-size:12px;transform:scaleX(0.9057);">#1</span>
<span style="left:499px;top:105.5px;line-height:16px;font-size:12px;">1</span>
<span style="left:508px;top:105.5px;line-height:16px;font-size:12px;transform:scaleX(0.9549);">(Suspended</span>
<span style="left:574.8px;top:105.5px;line-height:16px;font-size:12px;">:</span>
<span style="left:581px;top:105.5px;line-height:16px;font-size:12px;transform:scaleX(0.9727);">Breakpoint)</span>
<span style="left:458px;top:124px;line-height:16px;font-size:12px;transform:scaleX(0.9407);">main()</span>
<span style="left:494.3px;top:124px;line-height:16px;font-size:12px;transform:scaleX(0.9685);">at</span>
<span style="left:507.6px;top:124px;line-height:16px;font-size:12px;transform:scaleX(0.9548);">hello_world.c:37</span>
<span style="left:595.4px;top:124px;line-height:16px;font-size:12px;transform:scaleX(0.9770);">0x11da</span>
<span style="left:426.4px;top:143px;line-height:16px;font-size:12px;transform:scaleX(1.0229);">arm-none-eabi-gdb</span>
<span style="left:535px;top:143px;line-height:16px;font-size:12px;transform:scaleX(0.9669);">(10.2.90.20210621)</span>
<span style="left:394px;top:166.5px;line-height:16px;font-size:12px;transform:scaleX(0.9708);">hello_world.c</span>
<span style="left:495px;top:166.5px;line-height:16px;font-size:12px;transform:scaleX(0.9837);">0x20018040</span>
<span style="left:393px;top:557px;line-height:16px;font-size:12px;transform:scaleX(0.9529);">Installed SDKs</span>
<span style="left:488px;top:557px;line-height:16px;font-size:12px;transform:scaleX(0.9689);">Properties</span>
<span style="left:561px;top:557px;line-height:16px;font-size:12px;transform:scaleX(0.9667);">Problems</span>
<span style="left:630px;top:557px;line-height:16px;font-size:12px;transform:scaleX(0.9766);">Console</span>
<span style="left:706px;top:557px;line-height:16px;font-size:12px;transform:scaleX(0.9480);">Terminal</span>
<span style="left:769px;top:557px;line-height:16px;font-size:12px;transform:scaleX(1.0052);">Image Info</span>
<span style="left:847px;top:557px;line-height:16px;font-size:12px;transform:scaleX(0.9792);">Debugger Console</span>
<span style="left:966px;top:557px;line-height:16px;font-size:12px;transform:scaleX(0.9645);">Offline Peripherals</span>
<span style="left:378px;top:589.5px;line-height:16px;font-size:12px;transform:scaleX(0.9557);">mcxn9xxevk_hello_world</span>
<span style="left:509.5px;top:589.5px;line-height:16px;font-size:12px;transform:scaleX(0.9275);">LinkServer</span>
<span style="left:566.7px;top:589.5px;line-height:16px;font-size:12px;transform:scaleX(0.9837);">Debug</span>
<span style="left:605.7px;top:589.5px;line-height:16px;font-size:12px;transform:scaleX(1.0075);">[C/C++</span>
<span style="left:647.7px;top:589.5px;line-height:16px;font-size:12px;transform:scaleX(0.9277);">(NXP</span>
<span style="left:678px;top:589.5px;line-height:16px;font-size:12px;transform:scaleX(0.9695);">Semiconductors)</span>
<span style="left:769.5px;top:589.5px;line-height:16px;font-size:12px;transform:scaleX(0.9514);">MCU</span>
<span style="left:799.3px;top:589.5px;line-height:16px;font-size:12px;transform:scaleX(0.9944);">Application]</span>
<span style="left:936px;top:1034px;line-height:16px;font-size:12px;transform:scaleX(0.9818);">Writable</span>
<span style="left:1078px;top:1034px;line-height:16px;font-size:12px;">Smart Insert</span>
</div></body></html>
